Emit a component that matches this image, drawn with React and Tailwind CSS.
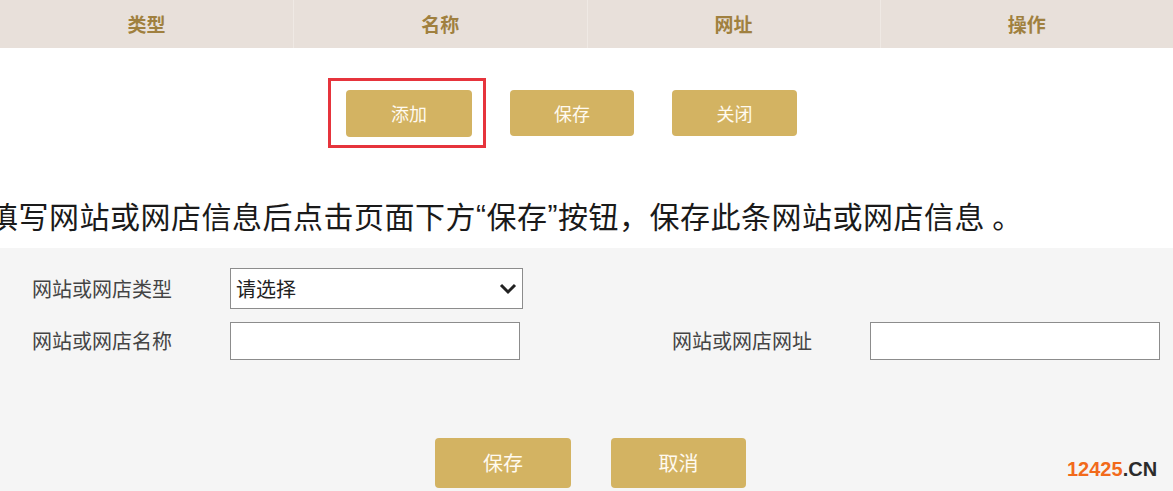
import React from "react";

const cjk = { fontFamily: '"Noto Sans CJK SC", "Noto Sans", sans-serif' };
const latin = { fontFamily: '"Liberation Sans", Arial, sans-serif' };

function GoldButton({ children, className = "" }) {
  return (
    <button
      type="button"
      className={`flex items-center justify-center rounded-[4px] bg-[#d3b362] text-[#fffaf0] ${className}`}
    >
      {children}
    </button>
  );
}

export default function App() {
  return (
    <div className="relative w-[1173px] h-[491px] overflow-hidden bg-white" style={cjk}>
      {/* table header */}
      <div className="grid h-[48px] grid-cols-4 bg-[#e8e0da] text-[19px] font-bold text-[#a0803f]">
        <div className="flex items-center justify-center">类型</div>
        <div className="flex items-center justify-center border-l border-[#efe9e4]">名称</div>
        <div className="flex items-center justify-center border-l border-[#efe9e4]">网址</div>
        <div className="flex items-center justify-center border-l border-[#efe9e4]">操作</div>
      </div>

      {/* top action buttons */}
      <div className="mt-[30px] flex items-center">
        <div className="ml-[328px] border-[3px] border-[#e6343c] pl-[15px] pr-[11px] pt-[9px] pb-[8px]">
          <GoldButton className="h-[47px] w-[126px] text-[18px]">添加</GoldButton>
        </div>
        <GoldButton className="ml-[24px] h-[46px] w-[124px] text-[18px]">保存</GoldButton>
        <GoldButton className="ml-[38px] h-[46px] w-[125px] text-[18px]">关闭</GoldButton>
      </div>

      {/* instruction */}
      <div className="mt-[47px] ml-[-12px] flex h-[40px] items-center whitespace-nowrap text-[30px] leading-[40px] tracking-[0.5px] text-[#1a1a1a]">
        填写网站或网店信息后点击页面下方<span style={latin}>“</span>保存<span style={latin}>”</span>按钮，保存此条网站或网店信息 。
      </div>

      {/* form panel */}
      <div className="mt-[13px] h-[300px] bg-[#f5f5f5] pt-[20px]">
        <div className="flex items-center pl-[32px]">
          <div className="w-[198px] text-[20px] text-[#444]">网站或网店类型</div>
          <div className="relative h-[41px] w-[293px]">
            <select
              className="h-full w-full appearance-none border border-[#8c8c8c] bg-white pl-[5px] text-[20px] text-[#222] outline-none"
              style={cjk}
              defaultValue=""
            >
              <option value="">请选择</option>
            </select>
            <svg
              className="pointer-events-none absolute right-[6px] top-[15px]"
              width="18"
              height="12"
              viewBox="0 0 18 12"
            >
              <polyline points="2,2 9,9 16,2" fill="none" stroke="#222" strokeWidth="3" />
            </svg>
          </div>
        </div>

        <div className="mt-[13px] flex items-center pl-[32px]">
          <div className="w-[198px] text-[20px] text-[#444]">网站或网店名称</div>
          <input className="h-[38px] w-[290px] border border-[#8c8c8c] bg-white outline-none" />
          <div className="ml-[152px] w-[198px] text-[20px] text-[#444]">网站或网店网址</div>
          <input className="h-[38px] w-[290px] border border-[#8c8c8c] bg-white outline-none" />
        </div>

        <div className="mt-[78px] flex items-center gap-[40px] pl-[435px]">
          <GoldButton className="h-[50px] w-[136px] text-[20px]">保存</GoldButton>
          <GoldButton className="h-[50px] w-[135px] text-[20px]">取消</GoldButton>
        </div>
      </div>

      {/* watermark */}
      <div
        className="absolute left-[1067px] top-[457px] text-[20px] font-bold leading-[24px]"
        style={latin}
      >
        <span className="text-[#f26a1b]">12425</span>
        <span className="text-[#2b2b2b]">.CN</span>
      </div>
    </div>
  );
}
